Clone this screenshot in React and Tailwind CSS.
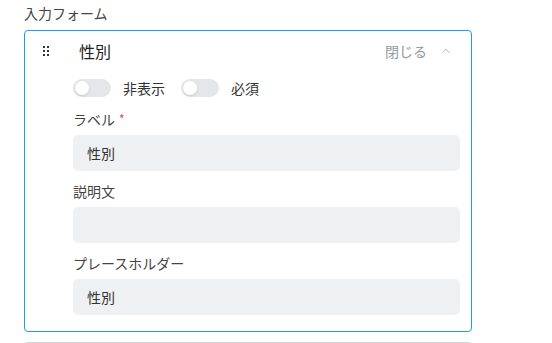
import { ChevronUp } from "lucide-react";

function Toggle({ label }) {
  return (
    <div className="flex items-center">
      <div className="w-[38px] h-[18px] rounded-full bg-[#e4e6ea] flex items-center px-[2px]">
        <div className="w-[14px] h-[14px] rounded-full bg-white shadow-sm"></div>
      </div>
      <span className="ml-3 text-sm text-[#333]">{label}</span>
    </div>
  );
}

function Field({ label, required, value, className = "" }) {
  return (
    <div className={className}>
      <div className="h-5 leading-5 text-sm text-[#444] flex items-center">
        {label}
        {required && <span className="ml-1 text-[#ef4444] text-xs">*</span>}
      </div>
      <div className="mt-[6px] h-9 rounded-[5px] bg-[#eff0f2] px-[14px] flex items-center text-sm text-[#333]">
        {value}
      </div>
    </div>
  );
}

export default function App() {
  return (
    <div
      className="w-[552px] h-[343px] bg-white overflow-hidden pl-6 pt-[3px]"
      style={{ fontFamily: '"Noto Sans CJK JP", "Noto Sans", sans-serif' }}
    >
      <div className="w-[448px]">
        <div className="h-5 leading-5 text-sm text-[#444]">入力フォーム</div>
        <div className="mt-[7px] border border-[#1e9be6] rounded-[4px] pb-[16px]">
          {/* Header */}
          <div className="h-[40px] flex items-center pl-[18px] pr-[18px]">
            <div className="grid grid-cols-2 gap-[2px]">
              {[0, 1, 2, 3, 4, 5].map((i) => (
                <div key={i} className="w-[2px] h-[2px] bg-[#333]"></div>
              ))}
            </div>
            <span className="ml-[30px] text-base text-[#222]">性別</span>
            <span className="ml-auto text-sm text-[#959aa0]">閉じる</span>
            <ChevronUp className="ml-[12px] w-[14px] h-[14px] text-[#959aa0]" strokeWidth={1.25} />
          </div>
          <div className="pl-[48px] pr-[11px]">
            <div className="mt-[7px] flex items-center gap-4">
              <Toggle label="非表示" />
              <Toggle label="必須" />
            </div>
            <Field className="mt-[11px]" label="ラベル" required value="性別" />
            <Field className="mt-[10px]" label="説明文" value="" />
            <Field className="mt-[10px]" label="プレースホルダー" value="性別" />
          </div>
        </div>
        <div className="mt-[10px] h-3 border-t-2 border-[#d0d3d8] rounded-t-[4px]"></div>
      </div>
    </div>
  );
}
